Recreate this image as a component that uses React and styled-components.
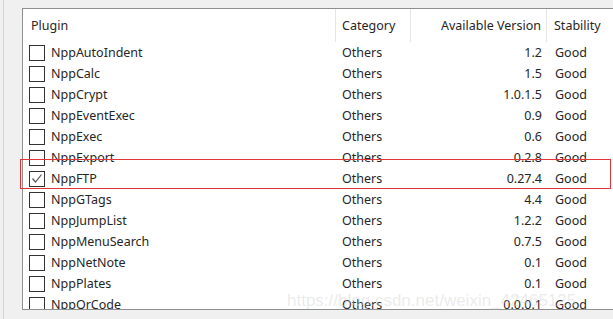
import React from 'react'
import styled, { createGlobalStyle } from 'styled-components'

const GlobalStyle = createGlobalStyle`
  html, body {
    margin: 0;
    padding: 0;
    background: #f0f0f0;
    overflow: hidden;
  }
`

const plugins = [
  { name: 'NppAutoIndent', version: '1.2' },
  { name: 'NppCalc', version: '1.5' },
  { name: 'NppCrypt', version: '1.0.1.5' },
  { name: 'NppEventExec', version: '0.9' },
  { name: 'NppExec', version: '0.6' },
  { name: 'NppExport', version: '0.2.8' },
  { name: 'NppFTP', version: '0.27.4', checked: true },
  { name: 'NppGTags', version: '4.4' },
  { name: 'NppJumpList', version: '1.2.2' },
  { name: 'NppMenuSearch', version: '0.7.5' },
  { name: 'NppNetNote', version: '0.1' },
  { name: 'NppPlates', version: '0.1' },
  { name: 'NppQrCode', version: '0.0.0.1' },
]

const COLS = '313px 75px 136px 80px'

const Window = styled.div`
  position: relative;
  width: 613px;
  height: 319px;
  box-sizing: border-box;
  border-left: 1px solid #d4d4d4;
  margin-left: 3px;
  padding: 8px 0 0 18px;
  font-family: 'Noto Sans', 'Open Sans', sans-serif;
  font-size: 12.5px;
  color: #262626;
`

const ListView = styled.div`
  width: 610px;
  height: 302px;
  box-sizing: border-box;
  border: 1px solid #8e8f8f;
  border-right: none;
  background: #fff;
  overflow: hidden;
`

const Header = styled.div`
  display: grid;
  grid-template-columns: ${COLS};
  height: 33px;
`

const HeaderCell = styled.div`
  display: flex;
  align-items: center;
  justify-content: ${({ $right }) => ($right ? 'flex-end' : 'flex-start')};
  padding: ${({ $pad }) => $pad};
  border-right: 1px solid #e5e5e5;
  white-space: nowrap;
`

const Row = styled.div`
  display: grid;
  grid-template-columns: ${COLS};
  height: 21px;
  align-items: center;
`

const NameCell = styled.div`
  display: flex;
  align-items: center;
  gap: 6px;
  padding-left: 6px;
  white-space: nowrap;
`

const Cell = styled.div`
  padding: ${({ $pad }) => $pad};
  text-align: ${({ $right }) => ($right ? 'right' : 'left')};
  white-space: nowrap;
`

const Box = styled.span`
  width: 14px;
  height: 14px;
  border: 1px solid #333;
  background: #fff;
  display: flex;
  align-items: center;
  justify-content: center;
  flex: none;
`

const Highlight = styled.div`
  position: absolute;
  left: 16px;
  top: 159px;
  width: 589px;
  height: 28px;
  border: 1px solid #e0363a;
  pointer-events: none;
`

const Watermark = styled.div`
  position: absolute;
  left: 283px;
  top: 291px;
  font-family: 'Liberation Sans', Arial, sans-serif;
  font-size: 17px;
  color: rgba(210, 210, 210, 0.45);
  white-space: nowrap;
  pointer-events: none;
`

const CheckBox = ({ checked }) => (
  <Box>
    {checked && (
      <svg width="12" height="12" viewBox="0 0 12 12">
        <path d="M1.5 5.5 L4.5 9 L10.5 1.5" fill="none" stroke="#555" strokeWidth="1.2" />
      </svg>
    )}
  </Box>
)

export default function App() {
  return (
    <Window>
      <GlobalStyle />
      <ListView>
        <Header>
          <HeaderCell $pad="0 0 0 8px">Plugin</HeaderCell>
          <HeaderCell $pad="0 0 0 6px">Category</HeaderCell>
          <HeaderCell $right $pad="0 5px 0 0">Available Version</HeaderCell>
          <HeaderCell $pad="0 0 0 7px">Stability</HeaderCell>
        </Header>
        {plugins.map(p => (
          <Row key={p.name}>
            <NameCell>
              <CheckBox checked={p.checked} />
              {p.name}
            </NameCell>
            <Cell $pad="0 0 0 6px">Others</Cell>
            <Cell $right $pad="0 5px 0 0">{p.version}</Cell>
            <Cell $pad="0 0 0 8px">Good</Cell>
          </Row>
        ))}
      </ListView>
      <Highlight />
      <Watermark>https://blog.csdn.net/weixin_42465125</Watermark>
    </Window>
  )
}
